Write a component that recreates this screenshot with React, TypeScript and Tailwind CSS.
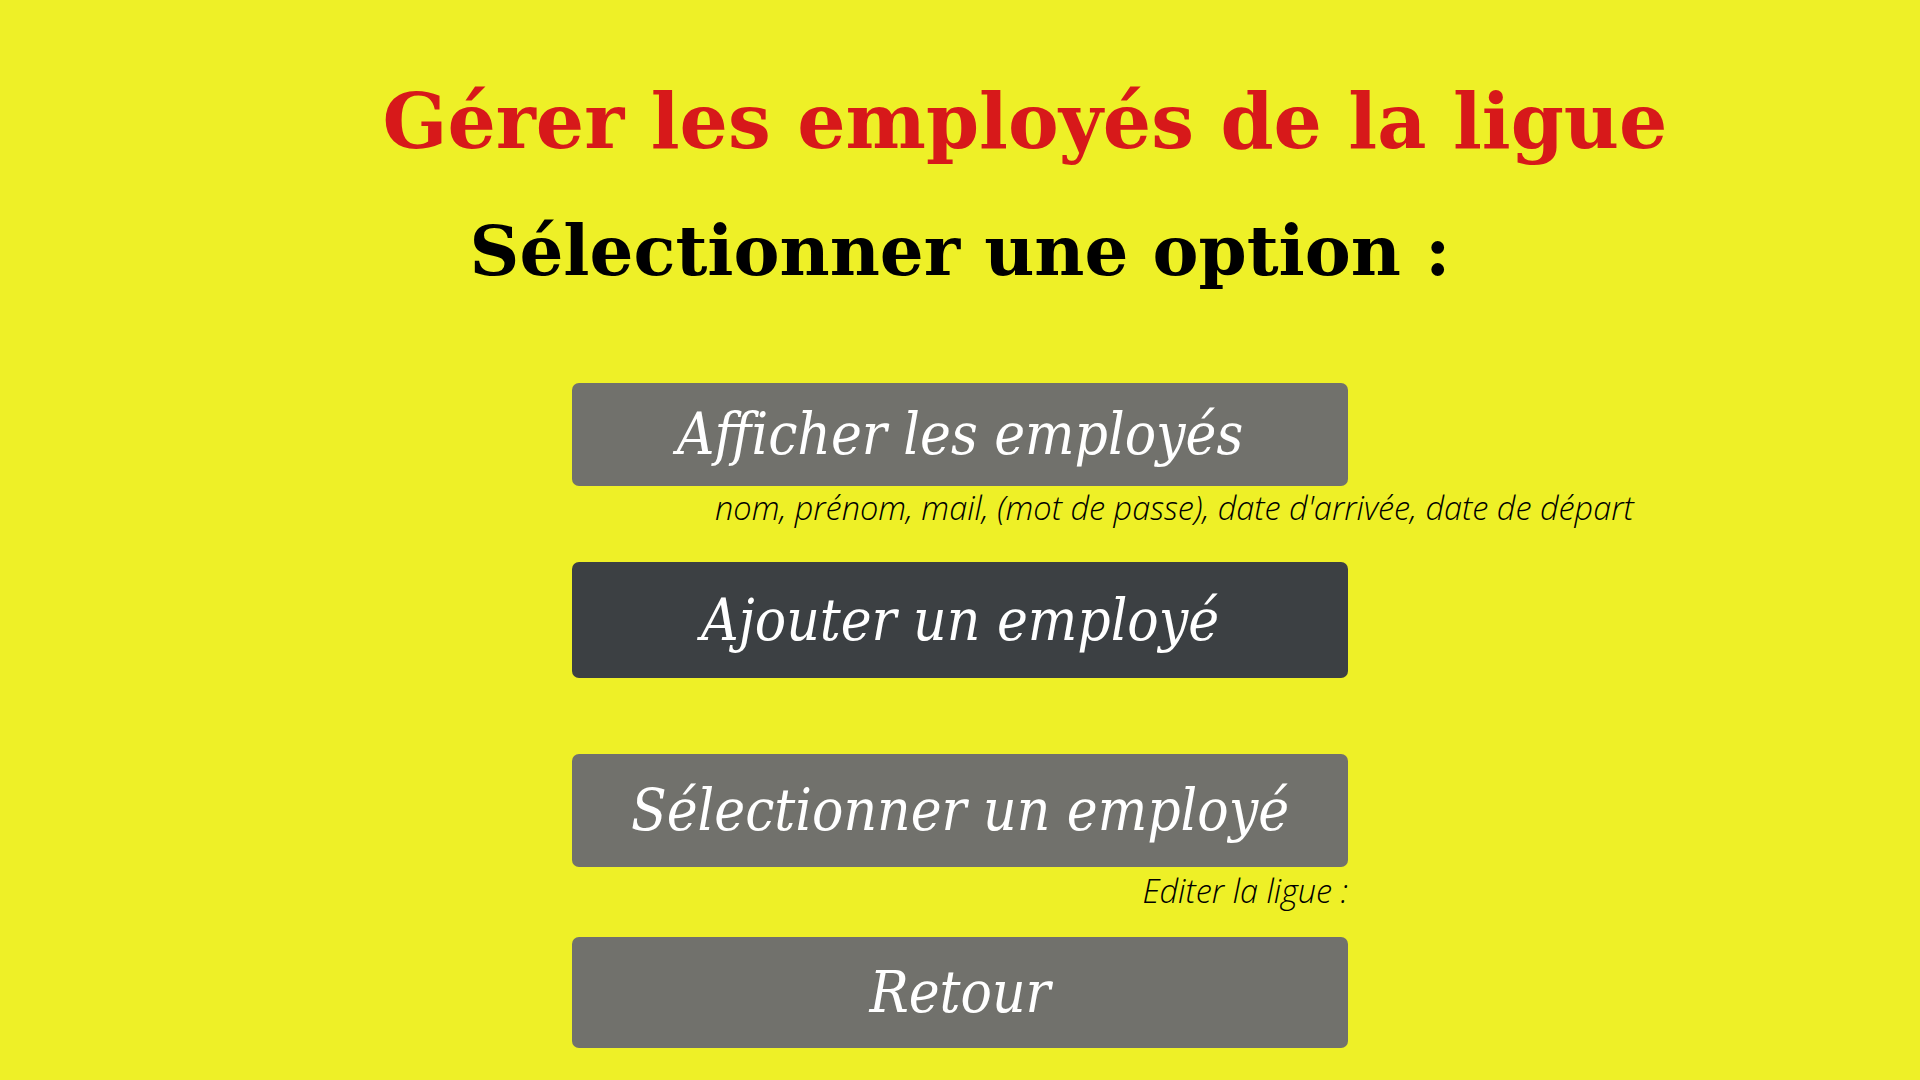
import React from 'react';

const serif = { fontFamily: '"DejaVu Serif", "Liberation Serif", serif' };
const caption = { fontFamily: '"Open Sans", sans-serif' };

const MenuButton = ({ label, dark, h }: { label: string; dark?: boolean; h: string }) => (
  <button
    className={`w-[776px] ${h} rounded-[7px] flex items-center justify-center text-white italic text-[58px] ${
      dark ? 'bg-[#3c4043]' : 'bg-[#71716c]'
    }`}
    style={{ fontFamily: '"DejaVu Serif Condensed", "DejaVu Serif", serif', fontStretch: 'condensed' }}
  >
    {label}
  </button>
);

const App = () => {
  return (
    <div className="w-[1920px] h-[1080px] bg-[#eef027] flex flex-col items-center pt-[62px] overflow-hidden">
      <div className="h-[120px] flex items-center pl-[130px]">
        <h1 className="text-[#d7191a] font-bold text-[76px] leading-none whitespace-nowrap" style={serif}>
          Gérer les employés de la ligue
        </h1>
      </div>
      <div className="h-[120px] mt-[8px] flex items-center">
        <h2 className="text-black font-bold text-[69px] leading-none whitespace-nowrap" style={serif}>
          Sélectionner une option :
        </h2>
      </div>

      <div className="mt-[73px]">
        <MenuButton label="Afficher les employés" h="h-[103px]" />
      </div>
      <div className="w-[776px] h-[44px] flex items-center">
        <p className="pl-[143px] whitespace-nowrap italic font-light text-[32.5px] text-black" style={caption}>
          nom, prénom, mail, (mot de passe), date d'arrivée, date de départ
        </p>
      </div>

      <div className="mt-[32px]">
        <MenuButton label="Ajouter un employé" dark h="h-[116px]" />
      </div>

      <div className="mt-[76px]">
        <MenuButton label="Sélectionner un employé" h="h-[113px]" />
      </div>
      <div className="w-[776px] h-[48px] flex items-center justify-end">
        <p className="whitespace-nowrap italic font-light text-[32.5px] text-black" style={caption}>
          Editer la ligue :
        </p>
      </div>

      <div className="mt-[22px]">
        <MenuButton label="Retour" h="h-[111px]" />
      </div>
    </div>
  );
};

export default App;
